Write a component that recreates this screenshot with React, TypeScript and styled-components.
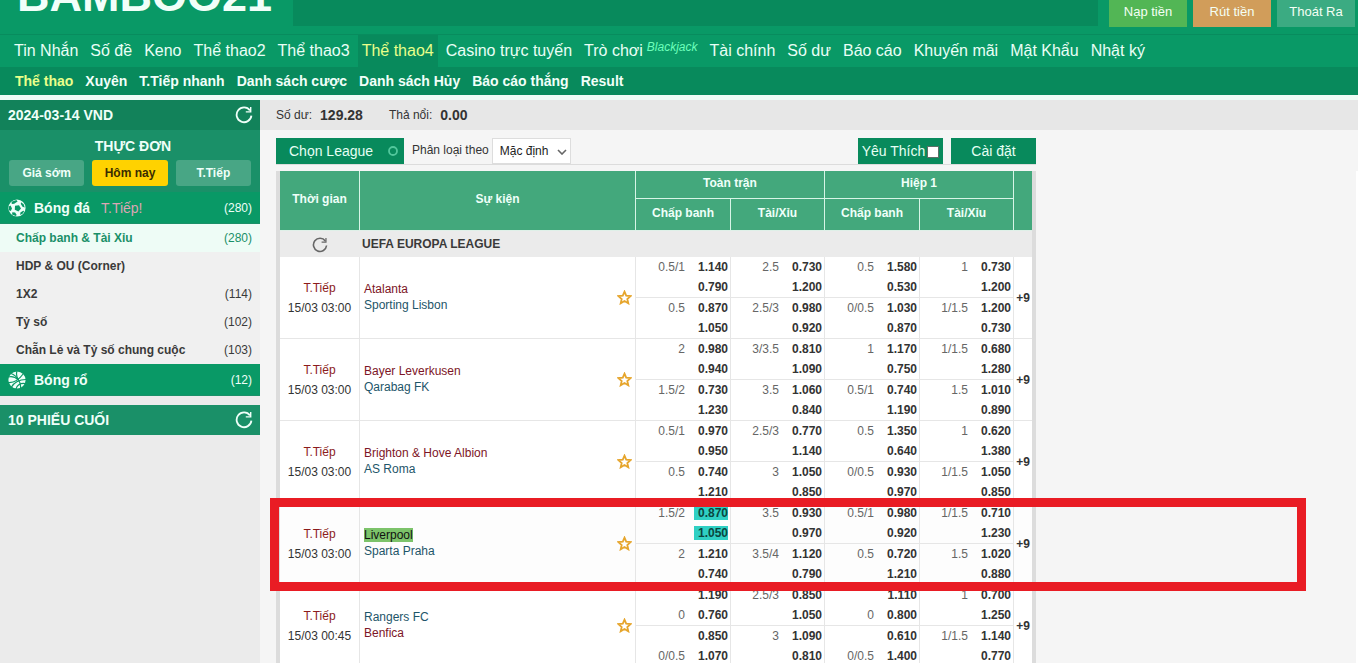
import React from "react";
import styled, { createGlobalStyle } from "styled-components";

const GlobalStyle = createGlobalStyle`
  *, *::before, *::after { box-sizing: border-box; }
  html, body { margin: 0; padding: 0; }
  body {
    background: #f5f5f5;
    color: #333;
    font-family: "Liberation Sans", Arial, sans-serif;
    font-size: 12px;
    line-height: 16px;
  }
  button, select, input { font-family: inherit; margin: 0; }
  a { color: inherit; text-decoration: none; }
`;

const Page = styled.div`
  height: 100vh;
  overflow: hidden;
  display: flex;
  flex-direction: column;
`;

const TopBar = styled.header`
  flex: none;
  height: 34px;
  display: flex;
  align-items: flex-start;
  background: #099966;
  overflow: hidden;
`;

const Logo = styled.div`
  flex: none;
  width: 293px;
  height: 26px;
  padding: 0 0 10px 17px;
  display: flex;
  align-items: flex-end;
  color: #f1fff9;
  font-size: 45px;
  line-height: 40px;
  font-weight: bold;
  white-space: nowrap;
`;

const Notice = styled.div`
  flex: 1;
  height: 26px;
  background: #088a5c;
`;

const Account = styled.div`
  display: flex;
  gap: 6px;
  padding: 0 3px 0 11px;
`;

const AccountButton = styled.button<{ $color: string }>`
  width: 78px;
  height: 27px;
  padding: 0 0 4px;
  border: 0;
  background: ${(p) => p.$color};
  color: #f4fff4;
  font-size: 13px;
  line-height: 16px;
`;

const MainNav = styled.nav`
  flex: none;
  height: 33px;
  display: flex;
  gap: 4px;
  padding: 0 10px;
  border-top: 1px solid #088c5e;
  background: #099966;
  white-space: nowrap;
`;

const MainLink = styled.a<{ $active?: boolean }>`
  padding: 0 4px;
  font-size: 16px;
  line-height: 31px;
  color: ${(p) => (p.$active ? "#e9ff8a" : "#e9fff6")};
  background: ${(p) => (p.$active ? "#088a5c" : "transparent")};
`;

const Tag = styled.span`
  margin-left: 4px;
  font-size: 12px;
  font-style: italic;
  color: #6dffbb;
  vertical-align: 5px;
  line-height: 16px;
`;

const SubNav = styled.nav`
  flex: none;
  height: 28px;
  display: flex;
  gap: 12px;
  padding: 0 15px;
  background: #088a5c;
  white-space: nowrap;
`;

const SubLink = styled.a<{ $active?: boolean }>`
  font-size: 14px;
  line-height: 28px;
  font-weight: bold;
  color: ${(p) => (p.$active ? "#e9ff8a" : "#f1fff9")};
`;

const Body = styled.div`
  flex: 1;
  min-height: 0;
  display: flex;
  border-top: 5px solid #eefcf6;
`;

const Sidebar = styled.aside`
  flex: none;
  width: 260px;
  background: #ebebeb;
`;

const PanelHead = styled.div<{ $color: string }>`
  height: 30px;
  display: flex;
  align-items: center;
  justify-content: space-between;
  padding: 0 7px 0 8px;
  background: ${(p) => p.$color};
  color: #effff9;
  font-size: 14px;
  font-weight: bold;
`;

const IconButton = styled.button`
  display: flex;
  padding: 0;
  border: 0;
  background: none;
  color: inherit;
`;

const MenuBlock = styled.div`
  height: 62px;
  padding: 8px 9px 6px;
  background: #1a9068;
  text-align: center;
`;

const MenuTitle = styled.h2`
  margin: 0 0 6px;
  padding-left: 6px;
  font-size: 14px;
  line-height: 16px;
  color: #effff9;
`;

const Tabs = styled.div`
  display: grid;
  grid-template-columns: repeat(3, 1fr);
  gap: 8px;
`;

const Tab = styled.button<{ $active?: boolean }>`
  height: 26px;
  padding: 0;
  border: 0;
  border-radius: 3px;
  background: ${(p) => (p.$active ? "#ffd200" : "#48a685")};
  color: ${(p) => (p.$active ? "#3a2d00" : "#effff9")};
  font-size: 12px;
  font-weight: bold;
`;

const SportRow = styled.a`
  height: 32px;
  display: flex;
  align-items: center;
  padding: 0 8px;
  border-bottom: 1px solid #1a9068;
  background: #099966;
  color: #effff9;
  svg { margin-right: 8px; }
`;

const SportName = styled.strong`
  font-size: 14px;
`;

const LiveTag = styled.span`
  margin-left: 11px;
  font-size: 14px;
  color: #dba6b4;
`;

const Count = styled.span`
  margin-left: auto;
  font-weight: normal;
`;

const MarketRow = styled.a<{ $active?: boolean }>`
  height: 28px;
  display: flex;
  align-items: center;
  padding: 0 8px 0 16px;
  font-weight: bold;
  background: ${(p) => (p.$active ? "#eefcf6" : "#f0f0f0")};
  color: ${(p) => (p.$active ? "#1a9068" : "#3a3a3a")};
`;

const Spacer = styled.div`
  height: 9px;
`;

const Content = styled.main`
  flex: 1;
  min-width: 0;
  position: relative;
  display: flex;
  flex-direction: column;
`;

const Balance = styled.div`
  flex: none;
  height: 30px;
  display: flex;
  align-items: center;
  padding: 0 16px;
  background: #e7e7e7;
`;

const Amount = styled.strong`
  margin: 0 26px 0 8px;
  font-size: 14px;
`;

const BoardRow = styled.div`
  flex: 1;
  min-height: 0;
  display: flex;
  justify-content: space-between;
`;

const SideFrame = styled.div`
  width: 2px;
  margin-top: 41px;
  background: #fff;
`;

const Board = styled.div`
  width: 760px;
  margin: 8px 0 0 16px;
`;

const Toolbar = styled.div`
  height: 27px;
  margin-bottom: 6px;
  display: flex;
  align-items: flex-start;
  border-bottom: 1px solid #dcdcdc;
`;

const ToolButton = styled.button<{ $width: number }>`
  width: ${(p) => p.$width}px;
  height: 26px;
  display: flex;
  align-items: center;
  justify-content: center;
  padding: 0;
  border: 0;
  background: #088a5c;
  color: #e6fff4;
  font-size: 14px;
`;

const LeagueButton = styled(ToolButton)`
  justify-content: space-between;
  padding: 0 6px 0 13px;
`;

const SortLabel = styled.label`
  display: flex;
  padding-left: 8px;
  gap: 3px;
  line-height: 24px;
`;

const SelectBox = styled.span`
  position: relative;
  display: flex;
  svg { position: absolute; right: 4px; top: 11px; pointer-events: none; }
`;

const Select = styled.select`
  width: 79px;
  height: 26px;
  padding: 0 0 0 7px;
  border: 1px solid #ddd;
  border-radius: 0;
  background: #fff;
  color: #222;
  font-size: 12px;
  appearance: none;
`;

const Favourite = styled.label`
  width: 85px;
  height: 26px;
  margin: 0 8px 0 auto;
  display: flex;
  align-items: center;
  justify-content: center;
  gap: 2px;
  background: #088a5c;
  color: #e6fff4;
  font-size: 14px;
`;

const Check = styled.input`
  appearance: none;
  width: 12px;
  height: 12px;
  margin-top: 2px;
  border: 1px solid #5d6f67;
  background: #fff;
`;

const OddsTable = styled.table`
  width: 100%;
  table-layout: fixed;
  border-collapse: separate;
  border-spacing: 0;
  border: solid #dcdcdc;
  border-width: 0 4px;
  background: #fff;
`;

const Th = styled.th<{ $tall?: boolean; $under?: boolean; $last?: boolean }>`
  height: ${(p) => (p.$tall ? 59 : p.$under ? 28 : 31)}px;
  padding: 0 0 3px;
  border: solid #d6f5e6;
  border-width: 0 ${(p) => (p.$last ? 0 : 1)}px ${(p) => (p.$under ? 1 : 0)}px 0;
  background: #43a87c;
  color: #effff9;
  font-size: 12px;
`;

const LeagueCell = styled.td<{ $icon?: boolean }>`
  height: 27px;
  padding: ${(p) => (p.$icon ? "2px 0 0 32px" : "0 0 0 2px")};
  border-top: 1px solid #dff0e8;
  background: #ebebeb;
  color: #3a3a3a;
  font-weight: bold;
  ${IconButton} { color: #666; }
`;

const Cell = styled.td<{ $tint?: boolean }>`
  height: 41px;
  padding: 0;
  border: solid #e6e6e6;
  border-width: 0 1px 1px 0;
  background: ${(p) => (p.$tint ? "#fdfdfd" : "#fff")};
`;

const TimeCell = styled(Cell)`
  text-align: center;
  line-height: 20px;
`;

const Live = styled.div`
  color: #8c1c1c;
`;

const EventCell = styled(Cell)`
  padding: 0 3px 1px 4px;
`;

const EventLine = styled.div`
  display: flex;
  align-items: center;
  justify-content: space-between;
`;

const Team = styled.div<{ $favourite?: boolean }>`
  color: ${(p) => (p.$favourite ? "#7d1526" : "#1d5569")};
`;

const Marked = styled.mark`
  background: #7cc36a;
  color: #111;
`;

const MoreCell = styled(Cell)`
  border-right: 0;
  text-align: center;
  font-weight: bold;
`;

const OddsLine = styled.div`
  height: 20px;
  display: flex;
  align-items: center;
  justify-content: flex-end;
  padding-right: 2px;
`;

const Line = styled.span`
  color: #666;
`;

const Price = styled.a<{ $hot?: boolean }>`
  width: 34px;
  margin-left: 9px;
  font-weight: bold;
  line-height: 14px;
  text-align: right;
  color: ${(p) => (p.$hot ? "#0b4640" : "#333")};
  background: ${(p) => (p.$hot ? "#2fd0c4" : "transparent")};
`;

const Highlight = styled.div`
  position: absolute;
  top: 398px;
  left: 10px;
  right: 52px;
  height: 93px;
  border: 9px solid #e91c24;
  pointer-events: none;
`;

const Reload = ({ size = 18 }: { size?: number }) => (
  <svg width={size} height={size} viewBox="0 0 18 18" fill="none" stroke="currentColor">
    <path d="M15 4.400A7.400 7.400 0 1 0 16.400 9.600" strokeWidth="1.800" />
    <path d="M16.400 1v5.600h-5.600V5.200h4.200V1z" fill="currentColor" stroke="none" />
  </svg>
);

const Football = () => (
  <svg width="18" height="18" viewBox="0 0 18 18">
    <circle cx="9" cy="9" r="8.600" fill="#effff9" />
    <g fill="#099966">
      <path d="M7 6.800l4-.6 2 3.300-2.600 3-3.600-1.700z" />
      <path d="M3.600 2.800L8.400 1l1.200 1.600-3.400 2.200-2.400.2z" />
      <path d="M13 3.200l2.700 2 1 3.200-2.200-.6-1.700-2.800z" />
      <path d="M.8 7.400l1.800-1 1.400 3-1.200 2.600-1.800-.8z" />
      <path d="M4.300 13.200l2.800.3 1.600 2.500-1 1-3.600-1.400z" />
      <path d="M12.400 13.600l2.800-1.900 1 .3-1.400 2.600-2.600 1.400z" />
    </g>
  </svg>
);

const Basketball = () => (
  <svg width="18" height="18" viewBox="0 0 18 18">
    <circle cx="9" cy="9" r="8.600" fill="#effff9" />
    <g fill="none" stroke="#099966" strokeWidth="1.200">
      <path d="M9 0C8 3 8.500 6 10.500 9S13 15 12.400 18" />
      <path d="M0 11.500C5 12 10.500 9.500 15.500 2.500" />
      <path d="M0 6C3.500 5 7.500 6 10.500 9" />
      <path d="M3.500 16C5.500 12 11 8.500 18 8.500" />
      <path d="M3 2.500C6 3.500 8.500 5.500 10.500 9" />
      <path d="M8 18C8.500 14.500 12 12 17 12.500" />
    </g>
  </svg>
);

const Star = () => (
  <svg width="15" height="15" viewBox="0 0 15 15">
    <path
      d="M7.500 1.700l1.700 4 4.400.4-3.300 2.900 1 4.300-3.800-2.300-3.800 2.300 1-4.300-3.300-2.900 4.400-.4z"
      fill="none"
      stroke="#e6a52c"
      strokeWidth="1.800"
    />
  </svg>
);

const Ring = () => (
  <svg width="10" height="10" viewBox="0 0 10 10">
    <circle cx="5" cy="5" r="4" fill="none" stroke="#52c79c" strokeWidth="1.800" />
  </svg>
);

const Chevron = () => (
  <svg width="10" height="6" viewBox="0 0 10 6">
    <path d="M1 1l4 4 4-4" fill="none" stroke="#666" strokeWidth="1.600" />
  </svg>
);

const mainLinks = [
  "Tin Nhắn", "Số đề", "Keno", "Thể thao2", "Thể thao3", "Thể thao4", "Casino trực tuyến",
  "Trò chơi", "Tài chính", "Số dư", "Báo cáo", "Khuyến mãi", "Mật Khẩu", "Nhật ký",
];

const subLinks = [
  "Thể thao", "Xuyên", "T.Tiếp nhanh", "Danh sách cược", "Danh sách Hủy", "Báo cáo thắng", "Result",
];

const markets = [
  { name: "Chấp banh & Tài Xỉu", count: 280 },
  { name: "HDP & OU (Corner)" },
  { name: "1X2", count: 114 },
  { name: "Tỷ số", count: 102 },
  { name: "Chẵn Lẻ và Tỷ số chung cuộc", count: 103 },
];

/* Each entry holds the handicap, the two prices and, if set, that the handicap belongs to the second line. */
type Odds = [string, string, string, boolean?];
type Match = {
  time: string;
  home: string;
  away: string;
  favourite: "home" | "away";
  marked?: boolean;
  odds: [Odds[], Odds[]];
};

const matches: Match[] = [
  {
    time: "15/03 03:00", home: "Atalanta", away: "Sporting Lisbon", favourite: "home",
    odds: [
      [["0.5/1", "1.140", "0.790"], ["2.5", "0.730", "1.200"], ["0.5", "1.580", "0.530"], ["1", "0.730", "1.200"]],
      [["0.5", "0.870", "1.050"], ["2.5/3", "0.980", "0.920"], ["0/0.5", "1.030", "0.870"], ["1/1.5", "1.200", "0.730"]],
    ],
  },
  {
    time: "15/03 03:00", home: "Bayer Leverkusen", away: "Qarabag FK", favourite: "home",
    odds: [
      [["2", "0.980", "0.940"], ["3/3.5", "0.810", "1.090"], ["1", "1.170", "0.750"], ["1/1.5", "0.680", "1.280"]],
      [["1.5/2", "0.730", "1.230"], ["3.5", "1.060", "0.840"], ["0.5/1", "0.740", "1.190"], ["1.5", "1.010", "0.890"]],
    ],
  },
  {
    time: "15/03 03:00", home: "Brighton & Hove Albion", away: "AS Roma", favourite: "home",
    odds: [
      [["0.5/1", "0.970", "0.950"], ["2.5/3", "0.770", "1.140"], ["0.5", "1.350", "0.640"], ["1", "0.620", "1.380"]],
      [["0.5", "0.740", "1.210"], ["3", "1.050", "0.850"], ["0/0.5", "0.930", "0.970"], ["1/1.5", "1.050", "0.850"]],
    ],
  },
  {
    time: "15/03 03:00", home: "Liverpool", away: "Sparta Praha", favourite: "home", marked: true,
    odds: [
      [["1.5/2", "0.870", "1.050"], ["3.5", "0.930", "0.970"], ["0.5/1", "0.980", "0.920"], ["1/1.5", "0.710", "1.230"]],
      [["2", "1.210", "0.740"], ["3.5/4", "1.120", "0.790"], ["0.5", "0.720", "1.210"], ["1.5", "1.020", "0.880"]],
    ],
  },
  {
    time: "15/03 00:45", home: "Rangers FC", away: "Benfica", favourite: "away",
    odds: [
      [["0", "1.190", "0.760", true], ["2.5/3", "0.850", "1.050"], ["0", "1.110", "0.800", true], ["1", "0.700", "1.250"]],
      [["0/0.5", "0.850", "1.070", true], ["3", "1.090", "0.810"], ["0/0.5", "0.610", "1.400", true], ["1/1.5", "1.140", "0.770"]],
    ],
  },
];

const OddsCells = ({ row, tint, hot }: { row: Odds[]; tint?: boolean; hot?: boolean }) => (
  <>
    {row.map(([line, first, second, onSecond], i) => (
      <Cell key={i} $tint={tint}>
        <OddsLine>
          {!onSecond && <Line>{line}</Line>}
          <Price href="#" $hot={hot && i === 0}>{first}</Price>
        </OddsLine>
        <OddsLine>
          {onSecond && <Line>{line}</Line>}
          <Price href="#" $hot={hot && i === 0}>{second}</Price>
        </OddsLine>
      </Cell>
    ))}
  </>
);

const MatchRows = ({ match }: { match: Match }) => (
  <>
    <tr>
      <TimeCell rowSpan={2} $tint={match.marked}>
        <Live>T.Tiếp</Live>
        {match.time}
      </TimeCell>
      <EventCell rowSpan={2} $tint={match.marked}>
        <EventLine>
          <div>
            <Team $favourite={match.favourite === "home"}>
              {match.marked ? <Marked>{match.home}</Marked> : match.home}
            </Team>
            <Team $favourite={match.favourite === "away"}>{match.away}</Team>
          </div>
          <IconButton aria-label="Yêu Thích"><Star /></IconButton>
        </EventLine>
      </EventCell>
      <OddsCells row={match.odds[0]} tint={match.marked} hot={match.marked} />
      <MoreCell rowSpan={2} $tint={match.marked}><a href="#">+9</a></MoreCell>
    </tr>
    <tr>
      <OddsCells row={match.odds[1]} tint={match.marked} />
    </tr>
  </>
);

export default function App() {
  return (
    <Page>
      <GlobalStyle />
      <TopBar>
        <Logo>BAMBOO21</Logo>
        <Notice />
        <Account>
          <AccountButton $color="#52b655">Nạp tiền</AccountButton>
          <AccountButton $color="#d19d5a">Rút tiền</AccountButton>
          <AccountButton $color="#3bab82">Thoát Ra</AccountButton>
        </Account>
      </TopBar>
      <MainNav>
        {mainLinks.map((text) => (
          <MainLink key={text} href="#" $active={text === "Thể thao4"}>
            {text}
            {text === "Trò chơi" && <Tag>Blackjack</Tag>}
          </MainLink>
        ))}
      </MainNav>
      <SubNav>
        {subLinks.map((text, i) => (
          <SubLink key={text} href="#" $active={i === 0}>{text}</SubLink>
        ))}
      </SubNav>
      <Body>
        <Sidebar>
          <PanelHead $color="#12825a">
            2024-03-14 VND
            <IconButton aria-label="Reload"><Reload /></IconButton>
          </PanelHead>
          <MenuBlock>
            <MenuTitle>THỰC ĐƠN</MenuTitle>
            <Tabs>
              <Tab>Giá sớm</Tab>
              <Tab $active>Hôm nay</Tab>
              <Tab>T.Tiếp</Tab>
            </Tabs>
          </MenuBlock>
          <SportRow href="#">
            <Football />
            <SportName>Bóng đá</SportName>
            <LiveTag>T.Tiếp!</LiveTag>
            <Count>(280)</Count>
          </SportRow>
          {markets.map((m, i) => (
            <MarketRow key={m.name} href="#" $active={i === 0}>
              {m.name}
              {m.count && <Count>({m.count})</Count>}
            </MarketRow>
          ))}
          <SportRow href="#">
            <Basketball />
            <SportName>Bóng rổ</SportName>
            <Count>(12)</Count>
          </SportRow>
          <Spacer />
          <PanelHead $color="#1a9068">
            10 PHIẾU CUỐI
            <IconButton aria-label="Reload"><Reload /></IconButton>
          </PanelHead>
        </Sidebar>
        <Content>
          <Balance>
            Số dư: <Amount>129.28</Amount>
            Thả nổi: <Amount>0.00</Amount>
          </Balance>
          <BoardRow>
            <Board>
              <Toolbar>
                <LeagueButton $width={128}>Chọn League<Ring /></LeagueButton>
                <SortLabel>
                  Phân loại theo
                  <SelectBox>
                    <Select defaultValue="default">
                      <option value="default">Mặc định</option>
                    </Select>
                    <Chevron />
                  </SelectBox>
                </SortLabel>
                <Favourite>Yêu Thích<Check type="checkbox" /></Favourite>
                <ToolButton $width={85}>Cài đặt</ToolButton>
              </Toolbar>
              <OddsTable>
                <colgroup>
                  <col width="80" />
                  <col />
                  <col width="95" />
                  <col width="94" />
                  <col width="95" />
                  <col width="94" />
                  <col width="18" />
                </colgroup>
                <thead>
                  <tr>
                    <Th rowSpan={2} $tall>Thời gian</Th>
                    <Th rowSpan={2} $tall>Sự kiện</Th>
                    <Th colSpan={2} $under>Toàn trận</Th>
                    <Th colSpan={2} $under>Hiệp 1</Th>
                    <Th rowSpan={2} $tall $last aria-label="More" />
                  </tr>
                  <tr>
                    <Th>Chấp banh</Th>
                    <Th>Tài/Xỉu</Th>
                    <Th>Chấp banh</Th>
                    <Th>Tài/Xỉu</Th>
                  </tr>
                </thead>
                <tbody>
                  <tr>
                    <LeagueCell $icon>
                      <IconButton aria-label="Reload"><Reload size={16} /></IconButton>
                    </LeagueCell>
                    <LeagueCell colSpan={6}>UEFA EUROPA LEAGUE</LeagueCell>
                  </tr>
                  {matches.map((match) => (
                    <MatchRows key={match.home} match={match} />
                  ))}
                </tbody>
              </OddsTable>
            </Board>
            <SideFrame />
          </BoardRow>
          <Highlight />
        </Content>
      </Body>
    </Page>
  );
}
